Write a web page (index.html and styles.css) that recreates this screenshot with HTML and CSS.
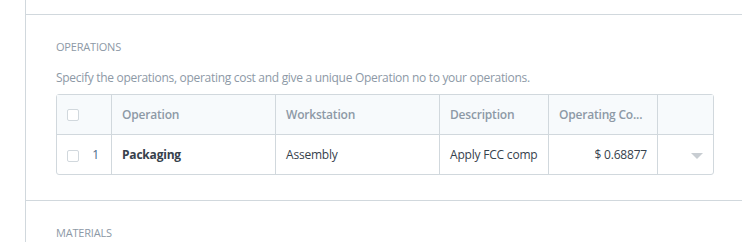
FILE: index.html
```html
<!DOCTYPE html>
<html lang="en">
<head>
    <meta charset="UTF-8">
    <title>Operations</title>
    <link rel="stylesheet" href="styles.css">
</head>
<body>
    <div class="page">
        <div class="form-layout">
            <div class="section section-top"></div>
            <div class="section">
                <div class="section-head">Operations</div>
                <p class="help">Specify the operations, operating cost and give a unique Operation no to your operations.</p>
                <div class="grid">
                    <div class="grid-row grid-heading">
                        <div class="col col-check"><span class="check"></span></div>
                        <div class="col col-op">Operation</div>
                        <div class="col col-ws">Workstation</div>
                        <div class="col col-desc">Description</div>
                        <div class="col col-cost">Operating Co...</div>
                        <div class="col col-edit"></div>
                    </div>
                    <div class="grid-row">
                        <div class="col col-check"><span class="check"></span><span class="idx">1</span></div>
                        <div class="col col-op strong">Packaging</div>
                        <div class="col col-ws">Assembly</div>
                        <div class="col col-desc">Apply FCC comp</div>
                        <div class="col col-cost num">$ 0.68877</div>
                        <div class="col col-edit"><span class="caret"></span></div>
                    </div>
                </div>
            </div>
            <div class="section section-last">
                <div class="section-head">Materials</div>
            </div>
        </div>
    </div>
</body>
</html>
```

FILE: styles.css
```css
body {
    margin: 0;
    background: #fff;
    font-family: "Open Sans", "Noto Sans", sans-serif;
    color: #36414c;
    overflow: hidden;
    height: 242px;
}
.page {
    padding-left: 25px;
}
.form-layout {
    border-left: 1px solid #d1d8dd;
    height: 242px;
    overflow: hidden;
}
.section {
    border-top: 1px solid #d1d8dd;
    padding: 25px 29px 25px 30px;
}
.section-top {
    border-top: none;
    height: 14px;
    padding: 0;
}
.section-last {
    padding-bottom: 0;
}
.section-head {
    font-size: 11px;
    text-transform: uppercase;
    color: #8d99a6;
    line-height: 14px;
    letter-spacing: -0.2px;
}
.help {
    margin: 16px 0 0;
    font-size: 12px;
    line-height: 16px;
    color: #8d99a6;
    letter-spacing: -0.3px;
}
.grid {
    margin-top: 8px;
    border: 1px solid #d1d8dd;
    border-radius: 3px;
    width: 658px;
    box-sizing: border-box;
}
.grid-row {
    display: flex;
    height: 39px;
    font-size: 12px;
    letter-spacing: -0.2px;
}
.grid-row + .grid-row {
    border-top: 1px solid #d1d8dd;
}
.grid-heading {
    background: #f7fafc;
    color: #8d99a6;
    font-weight: 600;
}
.col {
    display: flex;
    align-items: center;
    padding: 0 10px;
    border-left: 1px solid #d1d8dd;
    box-sizing: border-box;
    white-space: nowrap;
    overflow: hidden;
}
.col-check {
    border-left: none;
    width: 54px;
    padding-left: 10px;
}
.col-op { width: 164px; }
.col-ws { width: 164px; }
.col-desc { width: 109px; }
.col-cost { width: 109px; }
.col-edit { flex: 1; justify-content: flex-end; padding-right: 10px; }
.num { justify-content: flex-end; }
.strong { font-weight: 700; color: #36414c; }
.check {
    width: 10px;
    height: 10px;
    border: 1px solid #d1d8dd;
    border-radius: 2px;
    background: #fff;
}
.grid-row:not(.grid-heading) .check {
    margin-top: 2px;
}
.idx {
    margin-left: auto;
    margin-right: 2px;
    color: #4b6a8a;
}
.caret {
    width: 0;
    height: 0;
    border-left: 6px solid transparent;
    border-right: 6px solid transparent;
    border-top: 6px solid #c8cdd2;
    margin-top: 2px;
}
```
